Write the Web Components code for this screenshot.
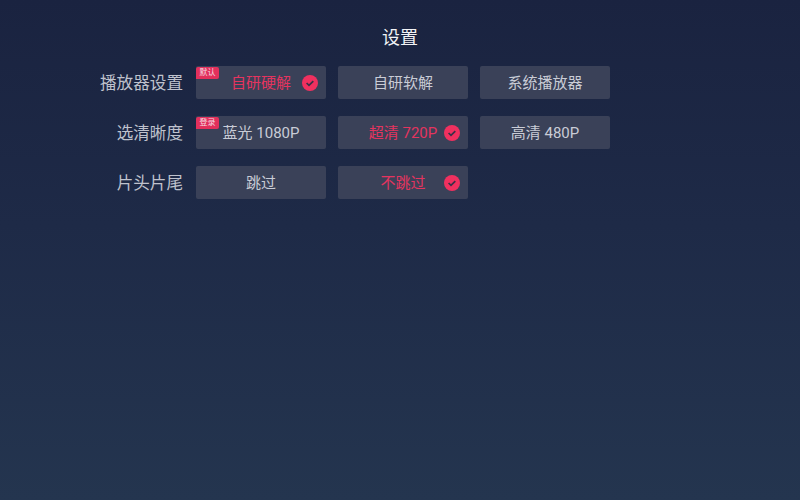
<!DOCTYPE html>
<html lang="zh">
<head>
<meta charset="utf-8">
<style>
  html, body { margin: 0; height: 100%; }
  body {
    width: 800px; height: 500px; overflow: hidden;
    background: linear-gradient(180deg, #1a2340 0%, #1e2a47 45%, #24354f 100%);
    font-family: Roboto, "Noto Sans CJK SC", sans-serif;
  }
</style>
</head>
<body>
<settings-page>
  <setting-row label="播放器设置">
    <option-button selected badge="默认">自研硬解</option-button>
    <option-button>自研软解</option-button>
    <option-button>系统播放器</option-button>
  </setting-row>
  <setting-row label="选清晰度">
    <option-button badge="登录">蓝光 1080P</option-button>
    <option-button selected>超清 720P</option-button>
    <option-button>高清 480P</option-button>
  </setting-row>
  <setting-row label="片头片尾">
    <option-button>跳过</option-button>
    <option-button selected>不跳过</option-button>
  </setting-row>
</settings-page>
<script>
class SettingsPage extends HTMLElement {
  constructor() {
    super();
    this.attachShadow({mode: 'open'});
    this.shadowRoot.innerHTML = `
      <style>
        :host { display: block; padding-top: 25px; color: #fff; }
        h1 {
          margin: 0 0 15px; text-align: center;
          font: 400 18px/26px Roboto, "Noto Sans CJK SC", sans-serif;
          color: #f2f3f6;
        }
        .rows { display: flex; flex-direction: column; gap: 17px; }
      </style>
      <h1>设置</h1>
      <div class="rows"><slot></slot></div>`;
  }
}
class SettingRow extends HTMLElement {
  constructor() {
    super();
    this.attachShadow({mode: 'open'});
    this.shadowRoot.innerHTML = `
      <style>
        :host { display: flex; align-items: flex-start; height: 33px; }
        .label {
          width: 183px; margin-right: 13px; text-align: right;
          font: 400 16.6px/35px Roboto, "Noto Sans CJK SC", sans-serif;
          color: #bfc2cd;
        }
        .options { display: flex; gap: 12px; }
      </style>
      <div class="label"></div>
      <div class="options"><slot></slot></div>`;
  }
  connectedCallback() {
    this.shadowRoot.querySelector('.label').textContent = this.getAttribute('label');
  }
}
class OptionButton extends HTMLElement {
  constructor() {
    super();
    this.attachShadow({mode: 'open'});
    this.shadowRoot.innerHTML = `
      <style>
        :host {
          display: flex; align-items: flex-start; justify-content: center;
          position: relative; box-sizing: border-box;
          width: 130px; height: 33px; border-radius: 2px;
          background: #3a4158;
          font: 400 15px/34px Roboto, "Noto Sans CJK SC", sans-serif;
          color: #c9ccd6;
        }
        :host([selected]) { color: #e4345f; }
        .badge {
          position: absolute; left: 0; top: 1px; height: 12px; padding: 0 3.5px;
          background: #e2305c; border-radius: 2px 2px 2px 0;
          font-size: 8px; line-height: 12px; color: #f6dbe3;
        }
        svg {
          display: none; position: absolute; right: 8px; top: 9px;
          width: 16px; height: 16px;
        }
        :host([selected]) svg { display: block; }
        .badge:empty { display: none; }
      </style>
      <span class="badge"></span>
      <span><slot></slot></span>
      <svg viewBox="0 0 16 16">
        <circle cx="8" cy="8" r="8" fill="#f0305f"/>
        <path d="M4.6 8l2.4 2.4 4.3-4.3" fill="none" stroke="#3a3148" stroke-width="1.7"/>
      </svg>`;
  }
  connectedCallback() {
    this.shadowRoot.querySelector('.badge').textContent = this.getAttribute('badge') || '';
  }
}
customElements.define('settings-page', SettingsPage);
customElements.define('setting-row', SettingRow);
customElements.define('option-button', OptionButton);
</script>
</body>
</html>
